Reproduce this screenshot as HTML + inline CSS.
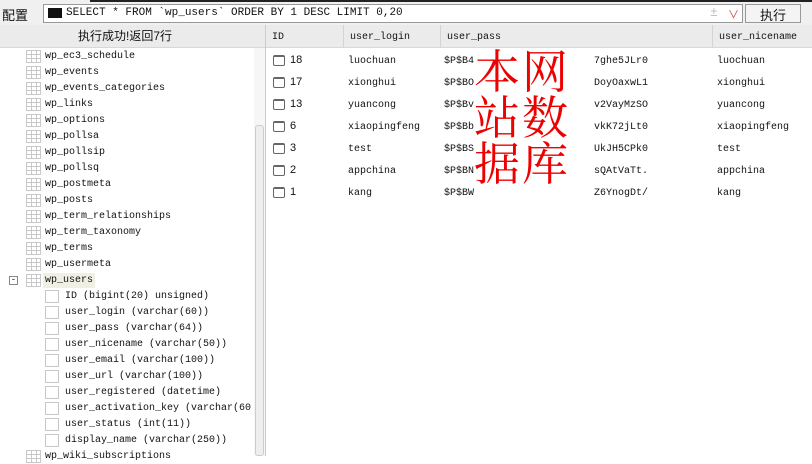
<!DOCTYPE html><html><head><meta charset="utf-8"><style>
body{margin:0;width:812px;height:456px;overflow:hidden;background:#fff;position:relative;font-family:"Liberation Mono","Noto Sans CJK SC",monospace;font-size:10px;line-height:15px;color:#111}
.a{position:absolute;white-space:nowrap}
.n{line-height:normal}
.tb{left:0;top:0;width:812px;height:25px;background:#f0f0f0}
.hdr{left:0;top:25px;width:812px;height:22px;background:#ebebeb;border-bottom:1px solid #d8d8d8}
.ic{position:absolute;width:15px;height:13px;border:1px solid #c8c8c8;box-sizing:border-box;background:linear-gradient(#c8c8c8,#c8c8c8) 0 3px/100% 1px no-repeat,linear-gradient(#c8c8c8,#c8c8c8) 0 7px/100% 1px no-repeat,linear-gradient(90deg,#c8c8c8,#c8c8c8) 4px 0/1px 100% no-repeat,linear-gradient(90deg,#c8c8c8,#c8c8c8) 9px 0/1px 100% no-repeat}
.fc{position:absolute;width:14px;height:13px;border:1px solid #c8c8c8;box-sizing:border-box}
.cb{position:absolute;width:12px;height:11px;border:1px solid #666;border-radius:2px;box-sizing:border-box;border-top-width:2px}
.cj{font-family:"Liberation Sans","Noto Sans CJK SC",sans-serif}
.wm{font-family:"Noto Serif CJK SC",serif;color:#e00;font-size:46px;line-height:46px;letter-spacing:2px}
</style></head><body>
<div class="a tb"></div>
<div class="a" style="left:90px;top:0;width:722px;height:2px;background:#222"></div>
<div class="a cj n" style="left:2px;top:5px;font-size:13px">配置</div>
<div class="a" style="left:43px;top:4px;width:700px;height:19px;border:1px solid #999;background:#fff;box-sizing:border-box"></div>
<div class="a" style="left:48px;top:8px;width:14px;height:10px;background:#111"></div>
<div class="a" style="left:66px;top:6px;font-size:11px">SELECT * FROM `wp_users` ORDER BY 1 DESC LIMIT 0,20</div>
<div class="a n" style="left:710px;top:5px;color:#bbb;font-size:13px">±</div>
<div class="a n" style="left:728px;top:6px;color:#c44;font-size:11px">∨</div>
<div class="a" style="left:745px;top:4px;width:56px;height:19px;border:1px solid #999;background:#f4f4f4;box-sizing:border-box"></div>
<div class="a cj n" style="left:760px;top:5px;font-size:13px">执行</div>
<div class="a hdr"></div>
<div class="a cj" style="left:78px;top:29px;font-size:12px">执行成功!返回7行</div>
<div class="a" style="left:265px;top:25px;width:1px;height:431px;background:#ccc"></div>
<div class="a" style="left:272px;top:30px">ID</div>
<div class="a" style="left:343px;top:25px;width:1px;height:22px;background:#d4d4d4"></div>
<div class="a" style="left:350px;top:30px">user_login</div>
<div class="a" style="left:440px;top:25px;width:1px;height:22px;background:#d4d4d4"></div>
<div class="a" style="left:447px;top:30px">user_pass</div>
<div class="a" style="left:712px;top:25px;width:1px;height:22px;background:#d4d4d4"></div>
<div class="a" style="left:719px;top:30px">user_nicename</div>
<div class="a" style="left:254px;top:48px;width:11px;height:408px;background:#f6f6f6"></div>
<div class="a" style="left:255px;top:125px;width:9px;height:331px;background:#eee;border:1px solid #ccc;border-radius:3px;box-sizing:border-box"></div>

<div class="a ic" style="left:26px;top:50px"></div><div class="a" style="left:45px;top:49px">wp_ec3_schedule</div>
<div class="a ic" style="left:26px;top:66px"></div><div class="a" style="left:45px;top:65px">wp_events</div>
<div class="a ic" style="left:26px;top:82px"></div><div class="a" style="left:45px;top:81px">wp_events_categories</div>
<div class="a ic" style="left:26px;top:98px"></div><div class="a" style="left:45px;top:97px">wp_links</div>
<div class="a ic" style="left:26px;top:114px"></div><div class="a" style="left:45px;top:113px">wp_options</div>
<div class="a ic" style="left:26px;top:130px"></div><div class="a" style="left:45px;top:129px">wp_pollsa</div>
<div class="a ic" style="left:26px;top:146px"></div><div class="a" style="left:45px;top:145px">wp_pollsip</div>
<div class="a ic" style="left:26px;top:162px"></div><div class="a" style="left:45px;top:161px">wp_pollsq</div>
<div class="a ic" style="left:26px;top:178px"></div><div class="a" style="left:45px;top:177px">wp_postmeta</div>
<div class="a ic" style="left:26px;top:194px"></div><div class="a" style="left:45px;top:193px">wp_posts</div>
<div class="a ic" style="left:26px;top:210px"></div><div class="a" style="left:45px;top:209px">wp_term_relationships</div>
<div class="a ic" style="left:26px;top:226px"></div><div class="a" style="left:45px;top:225px">wp_term_taxonomy</div>
<div class="a ic" style="left:26px;top:242px"></div><div class="a" style="left:45px;top:241px">wp_terms</div>
<div class="a ic" style="left:26px;top:258px"></div><div class="a" style="left:45px;top:257px">wp_usermeta</div>
<div class="a" style="left:9px;top:276px;width:9px;height:9px;border:1px solid #888;box-sizing:border-box;font-size:9px;line-height:6px;text-align:center">-</div>
<div class="a ic" style="left:26px;top:274px"></div><div class="a" style="left:43px;top:273px;width:52px;height:15px;background:#f0efe4"></div><div class="a" style="left:45px;top:273px">wp_users</div>
<div class="a fc" style="left:45px;top:290px"></div><div class="a" style="left:65px;top:289px">ID (bigint(20) unsigned)</div>
<div class="a fc" style="left:45px;top:306px"></div><div class="a" style="left:65px;top:305px">user_login (varchar(60))</div>
<div class="a fc" style="left:45px;top:322px"></div><div class="a" style="left:65px;top:321px">user_pass (varchar(64))</div>
<div class="a fc" style="left:45px;top:338px"></div><div class="a" style="left:65px;top:337px">user_nicename (varchar(50))</div>
<div class="a fc" style="left:45px;top:354px"></div><div class="a" style="left:65px;top:353px">user_email (varchar(100))</div>
<div class="a fc" style="left:45px;top:370px"></div><div class="a" style="left:65px;top:369px">user_url (varchar(100))</div>
<div class="a fc" style="left:45px;top:386px"></div><div class="a" style="left:65px;top:385px">user_registered (datetime)</div>
<div class="a fc" style="left:45px;top:402px"></div><div class="a" style="left:65px;top:401px">user_activation_key (varchar(60</div>
<div class="a fc" style="left:45px;top:418px"></div><div class="a" style="left:65px;top:417px">user_status (int(11))</div>
<div class="a fc" style="left:45px;top:434px"></div><div class="a" style="left:65px;top:433px">display_name (varchar(250))</div>
<div class="a ic" style="left:26px;top:450px"></div><div class="a" style="left:45px;top:449px">wp_wiki_subscriptions</div>

<div class="a cb" style="left:273px;top:55px"></div><div class="a cj" style="left:290px;top:53px;font-size:11px">18</div><div class="a" style="left:348px;top:54px">luochuan</div><div class="a" style="left:444px;top:54px">$P$B4</div><div class="a" style="left:594px;top:54px">7ghe5JLr0</div><div class="a" style="left:717px;top:54px">luochuan</div>
<div class="a cb" style="left:273px;top:77px"></div><div class="a cj" style="left:290px;top:75px;font-size:11px">17</div><div class="a" style="left:348px;top:76px">xionghui</div><div class="a" style="left:444px;top:76px">$P$BO</div><div class="a" style="left:594px;top:76px">DoyOaxwL1</div><div class="a" style="left:717px;top:76px">xionghui</div>
<div class="a cb" style="left:273px;top:99px"></div><div class="a cj" style="left:290px;top:97px;font-size:11px">13</div><div class="a" style="left:348px;top:98px">yuancong</div><div class="a" style="left:444px;top:98px">$P$Bv</div><div class="a" style="left:594px;top:98px">v2VayMzSO</div><div class="a" style="left:717px;top:98px">yuancong</div>
<div class="a cb" style="left:273px;top:121px"></div><div class="a cj" style="left:290px;top:119px;font-size:11px">6</div><div class="a" style="left:348px;top:120px">xiaopingfeng</div><div class="a" style="left:444px;top:120px">$P$Bb</div><div class="a" style="left:594px;top:120px">vkK72jLt0</div><div class="a" style="left:717px;top:120px">xiaopingfeng</div>
<div class="a cb" style="left:273px;top:143px"></div><div class="a cj" style="left:290px;top:141px;font-size:11px">3</div><div class="a" style="left:348px;top:142px">test</div><div class="a" style="left:444px;top:142px">$P$BS</div><div class="a" style="left:594px;top:142px">UkJH5CPk0</div><div class="a" style="left:717px;top:142px">test</div>
<div class="a cb" style="left:273px;top:165px"></div><div class="a cj" style="left:290px;top:163px;font-size:11px">2</div><div class="a" style="left:348px;top:164px">appchina</div><div class="a" style="left:444px;top:164px">$P$BN</div><div class="a" style="left:594px;top:164px">sQAtVaTt.</div><div class="a" style="left:717px;top:164px">appchina</div>
<div class="a cb" style="left:273px;top:187px"></div><div class="a cj" style="left:290px;top:185px;font-size:11px">1</div><div class="a" style="left:348px;top:186px">kang</div><div class="a" style="left:444px;top:186px">$P$BW</div><div class="a" style="left:594px;top:186px">Z6YnogDt/</div><div class="a" style="left:717px;top:186px">kang</div>
<div class="a wm" style="left:474px;top:46px">本网<br>站数<br>据库</div>
</body></html>
